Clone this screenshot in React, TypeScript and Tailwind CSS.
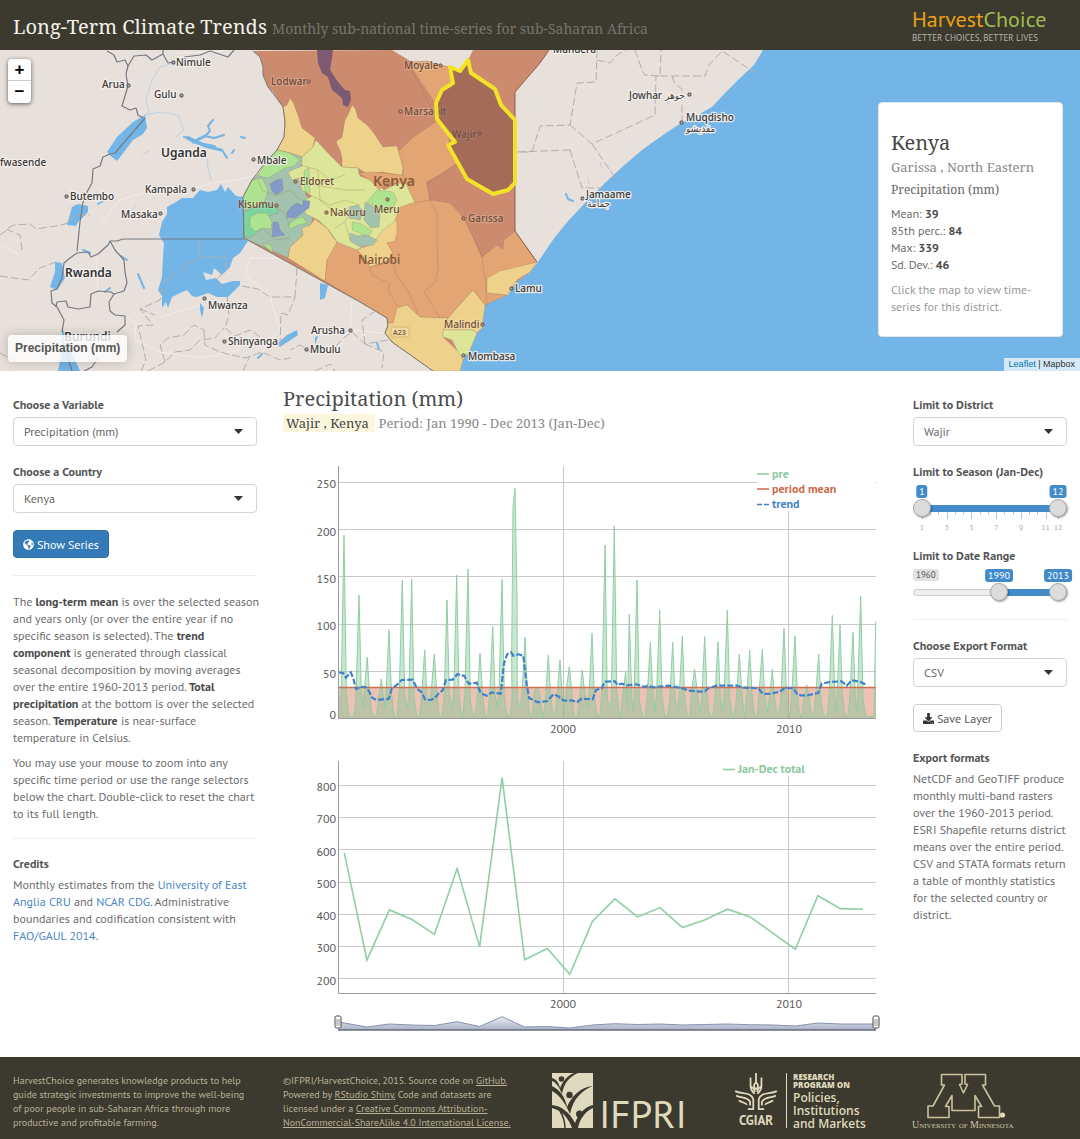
import { useId, useState } from 'react';
import type { ReactNode } from 'react';
import { FaGlobeAmericas, FaDownload } from 'react-icons/fa';

const RED = '#cc8a6e';
const ORANGE = '#e4a574';
const YELLOW = '#eed28c';
const LIME = '#dde698';
const GREEN = '#aee38f';
const MINT = '#7ed3a0';
const TEAL = '#a3c3ae';
const BLUE = '#839bc9';
const WATER = '#73b5e6';

const DISTRICTS: [string, string][] = [
  [ORANGE, '413,70 412,62 427,61 440,65 450,67 452,83 442,90 435,103'],
  [ORANGE, '398,152 412,138 437,121 450,135 448,145 457,163 443,173 427,182 430,200 412,204 403,183 403,167'],
  [YELLOW, '290,98 293,102 298,115 302,128 315,138 313,147 302,157 290,153 277,150 284,137 285,120 283,107 287,105'],
  [YELLOW, '352,105 355,108 358,118 367,125 373,132 383,147 397,146 400,157 403,168 402,176 383,172 367,174 358,168 342,167 342,158 340,150 336,142 342,137 345,120 348,115'],
  [TEAL, '277,150 290,153 302,157 305,165 302,180 306,195 315,205 312,222 303,235 290,247 288,258 244,238 243,197 252,180 263,170 265,163'],
  [LIME, '316,140 328,153 342,167 358,168 360,176 376,182 384,190 400,182 406,184 415,203 404,208 398,220 388,230 374,241 357,250 346,249 337,242 333,236 327,228 318,220 306,214 300,203 312,196 302,190 299,178 292,180 288,172 302,166 302,157 313,147'],
  [YELLOW, '315,219 327,228 333,237 337,242 335,253 327,260 325,281 288,258 290,247 303,235 302,228 310,225'],
  [ORANGE, '358,173 373,172 403,175 407,183 387,183 379,190 370,180'],
  [ORANGE, '412,203 430,200 450,203 463,217 473,237 482,257 497,245 503,249 504,240 515,231 537,262 517,268 487,278 487,293 507,295 485,305 473,290 448,318 420,317 407,305 397,310 393,323 388,323 387,318 325,281 327,260 337,242 357,250 370,267 387,263 393,253 387,243 395,240 395,220 400,207'],
  [YELLOW, '357,250 373,243 383,230 388,226 397,220 397,233 395,241 387,243 393,253 387,261 370,267 365,258'],
  [YELLOW, '537,262 530,272 517,280 507,295 487,293 487,278 500,271 517,267'],
  [YELLOW, '407,305 420,317 448,318 443,332 443,337 460,353 463,360 460,371 433,371 392,342 385,333 388,323 393,323 397,308'],
  [YELLOW, '473,290 485,305 482,328 477,333 472,330 443,330 448,318'],
  [LIME, '443,330 472,330 477,333 470,350 463,360 457,350 452,340 443,337'],
  [GREEN, '277,150 290,153 300,160 294,166 285,168 268,178 258,176 265,163'],
  [GREEN, '252,180 262,178 268,190 264,203 246,210 243,197'],
  [MINT, '244,212 255,207 266,203 276,206 278,213 262,218 262,228 250,238 244,236'],
  [GREEN, '250,217 258,213 267,213 272,222 271,229 262,228 255,232 250,226'],
  [BLUE, '270,184 276,180 282,179 283,190 276,195 272,191'],
  [BLUE, '287,212 292,206 297,203 302,205 303,200 310,201 309,208 302,213 295,218 287,217'],
  [BLUE, '273,222 278,222 280,230 285,235 272,237'],
  [GREEN, '288,225 296,219 303,217 307,223 298,225 290,229'],
  [GREEN, '262,243 271,245 273,253'],
  [GREEN, '304,171 309,168 310,193 305,192'],
  [GREEN, '377,190 393,192 397,200 392,209 384,212 377,207 367,202'],
  [TEAL, '349,207 358,205 364,212 360,220 349,218'],
  [TEAL, '365,202 374,207 380,214 379,227 371,228 364,220'],
  [GREEN, '352,222 362,224 372,231 368,237 352,230'],
  [TEAL, '350,233 358,236 367,235 377,240 373,245 360,247 350,241'],
];

const KENYA =
  '253,51 260,57 263,67 263,75 268,87 273,92 278,100 283,107 285,123 284,137 277,150 265,163 263,170 252,180 243,197 244,238 360,302 387,318 388,326 385,333 392,342 433,371 460,371 463,360 470,350 477,333 482,328 485,305 497,298 507,295 517,282 530,272 537,262 515,231 515,92 540,63 549,50 473,50 468,60 460,71 450,67 440,65 427,61 412,62 402,56 392,50';
const WAJIR =
  '450,67 460,71 468,60 471,73 495,89 501,105 515,120 515,183 508,190 493,194 467,179 448,145 455,142 437,119 436,103 442,90 453,83';

const SOLID_BORDERS = [
  'M107 51 L114 55 L117 62 L125 60 L128 66 L134 56 L146 55 L152 60 L163 54 L168 63 L174 62 M163 54 L163 50 M184 57 L200 55 L210 51 L228 57 L234 50',
  'M128 66 L126 74 L128 86 L122 106 L130 110 L136 108 L138 115 L143 118',
  'M110 154 L103 157 L100 166 L93 169 L92 183 L88 190 L83 202 L80 222 L77 251',
  'M244 239 L123 239 L117 241 L110 241 L108 245 L98 254 L91 257 L88 252 L77 253 L70 258 L64 263 L62 278 L57 289 L51 291 L52 303 L57 307 L64 320 L62 332',
  'M110 241 L115 250 L124 260 L125 272 L127 283 L124 291 L114 294 L111 292 L98 291 L91 294 L90 307 L78 309 L68 307 L66 301 L57 302 L56 307',
  'M114 294 L109 302 L110 311 L115 315 L125 316 L125 325 L117 332 M98 358 L92 367 L84 371 M66 345 L68 358 L72 371',
];
const DASHED_BORDERS = [
  'M22 250 L20 235 L6 229 L14 225 L30 224 L36 229 L62 225 L70 222 L72 216 L90 215',
  'M0 235 L10 228 M0 276 L28 280 L40 268 L56 262 M0 353 L15 361',
  'M141 371 L146 360 L138 326 L153 325 L140 309 L160 300 L163 282 L199 257 L225 257 L226 268 L217 280 L222 290',
  'M199 240 L199 256 M140 309 L155 315 M242 286 L258 289 L270 297 L295 297 L297 268',
  'M280 346 L281 313 L288 315 L295 297 M227 296 L229 315 L225 328 L235 336 L250 330 L265 340',
  'M148 371 L165 362 L175 352 L190 350 L200 340 L215 338 L224 328 M165 362 L160 345 L168 338 L184 335 L194 325 L204 330',
  'M204 330 L205 345 L220 352 L245 358 L262 352 L280 360 L290 358 M243 371 L250 356 M315 371 L330 364 L335 371',
  'M388 340 L365 344 L352 332 L345 337 L330 352 L312 353 L300 345 L290 350 M365 344 L362 320 L374 312 M365 344 L384 352 L382 368',
  'M597 50 L596 82 L577 83 L570 125 L540 126 L532 152 L516 152 M570 125 L592 144 L655 115 L656 76',
  'M597 60 L610 63 L617 55 L626 50 M635 50 L642 70 L645 75 L660 76 L661 50 M660 76 L705 76 L709 65 L722 51 L754 72',
  'M672 76 L675 84 L682 89 L682 122 M592 144 L618 182 M570 150 L515 152 M570 150 L582 188 L604 188',
];
const LAKES = [
  '243,197 236,196 228,187 225,192 221,184 217,190 208,192 200,190 193,198 182,198 176,202 167,207 167,214 162,222 159,235 164,243 163,257 162,277 158,290 162,296 162,308 166,302 168,308 172,297 178,294 187,290 192,296 197,297 208,293 217,297 228,297 240,285 240,281 233,281 222,284 216,278 206,280 203,272 212,275 214,268 222,275 230,267 233,258 240,253 248,241 244,238',
  '145,115 147,128 143,134 133,140 124,152 117,161 112,157 107,152 117,137 133,122',
  '72,207 78,204 88,206 88,212 78,222 76,226 67,225',
  '55,262 62,263 65,278 57,290 50,287 55,272',
  '62,330 67,333 72,353 80,371 58,371 62,350',
  '297,330 298,335 280,347 277,344 287,335',
  '320,283 328,285 325,298 320,300',
  '315,337 318,336 315,345',
  '200,303 204,308 202,318 200,310',
];

type Place = { n: string; x: number; y: number; d?: [number, number]; k?: boolean };
const PLACES: Place[] = [
  { n: 'Nimule', x: 176, y: 66, d: [173, 62] },
  { n: 'Arua', x: 102, y: 88, d: [128, 85] },
  { n: 'Gulu', x: 154, y: 98, d: [181, 95] },
  { n: 'fwasende', x: 0, y: 166 },
  { n: 'Mbale', x: 257, y: 164, d: [253, 159] },
  { n: 'Butembo', x: 70, y: 200, d: [66, 196] },
  { n: 'Kampala', x: 145, y: 193, d: [193, 189] },
  { n: 'Masaka', x: 121, y: 218, d: [160, 213] },
  { n: 'Mwanza', x: 208, y: 309, d: [204, 298] },
  { n: 'Shinyanga', x: 228, y: 345, d: [224, 341] },
  { n: 'Arusha', x: 311, y: 334, d: [350, 330] },
  { n: 'Mbulu', x: 310, y: 353, d: [306, 349] },
  { n: 'Mombasa', x: 468, y: 360, d: [463, 355] },
  { n: 'Lamu', x: 515, y: 292, d: [511, 288] },
  { n: 'Mandera', x: 553, y: 53 },
  { n: 'Jowhar', x: 629, y: 99, d: [689, 94] },
  { n: 'Muqdisho', x: 686, y: 121, d: [681, 122] },
  { n: 'Jamaame', x: 586, y: 198, d: [582, 198] },
  { n: 'Lodwar', x: 271, y: 85, d: [308, 81], k: true },
  { n: 'Moyale', x: 404, y: 69, d: [440, 65], k: true },
  { n: 'Marsabit', x: 404, y: 115, d: [400, 111], k: true },
  { n: 'Wajir', x: 452, y: 138, d: [479, 133], k: true },
  { n: 'Garissa', x: 468, y: 222, d: [463, 218], k: true },
  { n: 'Malindi', x: 444, y: 328, d: [482, 324], k: true },
  { n: 'Eldoret', x: 300, y: 185, d: [295, 181], k: true },
  { n: 'Nakuru', x: 330, y: 216, d: [326, 212], k: true },
  { n: 'Kisumu', x: 238, y: 208, d: [276, 205], k: true },
  { n: 'Meru', x: 374, y: 213, d: [387, 199], k: true },
];

function MapCanvas() {
  return (
    <svg className="absolute inset-0 h-full w-full" viewBox="0 50 1080 321" preserveAspectRatio="xMidYMid slice" role="img" aria-label="Precipitation map of Kenya">
      <rect x="0" y="50" width="1080" height="321" fill="#e8e0da" />
      <g fill="none" stroke="#f3eeea" strokeWidth="1">
        <path d="M193 189 L212 183 L236 180 L252 176 M153 190 L120 200 L100 225 M270 297 L245 275 L250 258 L285 258 M270 297 L280 330 L262 352 M350 330 L384 333 M0 245 L18 254 M160 317 L200 305 M96 258 L98 290 M352 302 L350 330 L340 345 M125 318 L136 322 L135 340 L160 352 L200 358 L240 350" />
        <path d="M178 53 L210 52 L228 50" />
      </g>
      <polygon fill={WATER} points="763,50 754,65 740,78 726,92 712,107 698,115 681,123 663,135 642,150 621,168 605,183 586,202 569,220 555,237 544,253 538,262 530,272 517,282 508,295 497,299 485,305 482,328 477,333 470,350 463,360 460,371 1080,371 1080,50" />
      {LAKES.map((p) => <polygon key={p} points={p} fill={WATER} />)}
      <g fill="none" stroke={WATER} strokeLinecap="round" strokeLinejoin="round">
        <path strokeWidth="4" d="M188 138 L196 142 L204 145 L214 147" />
        <path strokeWidth="3" d="M193 142 L205 136 M205 146 L221 150" />
        <path strokeWidth="2" d="M205 136 L210 131 L208 126 L213 120 M205 136 L214 138 L224 135 M222 150 L227 158 M241 137 L245 138 M184 137 L188 138 M98 204 L103 201 M138 274 L144 288 M105 292 L110 288 M232 153 L234 150 M258 358 L262 354 M377 343 L379 349 M566 194 L568 199 L573 201 M83 250 L90 253 M121 256 L127 260" />
        <path strokeWidth="1" stroke="#b9d3e4" d="M174 63 L160 67 L152 80 L146 100 L149 112 L145 115 L160 112 L178 115 L184 130 L176 137 M207 158 L208 168 L211 180 M143 154 L150 150 M128 214 L136 205 M600 162 L602 168 M588 178 L589 184" />
      </g>
      <g fill="none" stroke="#b3aeab" strokeWidth="1" strokeDasharray="8 3">
        {DASHED_BORDERS.map((d) => <path key={d} d={d} />)}
      </g>
      <g fill="none" stroke="#737a85" strokeWidth="1.2" strokeLinejoin="round">
        {SOLID_BORDERS.map((d) => <path key={d} d={d} />)}
        <path d="M145 118 L115 153 L110 154" />
      </g>
      <polygon points={KENYA} fill={RED} />
      {DISTRICTS.map(([fill, pts], i) => (
        <polygon key={i} points={pts} fill={fill} stroke="#8c7060" strokeOpacity="0.35" strokeWidth="0.7" />
      ))}
      <g fill="none" stroke="#8c6a50" strokeOpacity="0.35" strokeWidth="0.8">
        <path d="M427 182 L430 200 L437 213 L437 240 L438 270 L435 282 L424 292 L440 318 M473 237 L482 257 L485 280 L487 305 M370 267 L372 275 L390 284 L388 290 L397 306 M392 254 L396 275 L408 290 L418 315 M412 70 L437 119 M428 183 L452 168" />
        <path d="M258 180 L262 190 L275 196 L290 190 L300 200 M275 206 L285 214 L290 226 M262 228 L275 240 L290 238 M300 165 L318 170 L330 180 L345 175 M318 170 L320 200 L332 210 M312 196 L330 205 L345 200 L360 205 M335 228 L345 222 L350 212 M345 222 L350 240 M315 185 L345 190 L365 190" />
      </g>
      <polygon points="317,50 333,50 332,58 330,70 338,82 345,90 350,91 351,100 348,107 343,105 342,98 332,90 328,77 322,73 318,63" fill="#7d5a72" />
      <polyline points="253,51 260,57 263,67 263,75 268,87 278,100 283,107 285,123 284,137 277,150 265,163 252,180 243,197 244,238 360,302 387,318 388,326 385,333 392,342 433,371" fill="none" stroke="#7c7a70" strokeWidth="1" />
      <polyline points="549,50 540,63 515,92 515,231 537,262" fill="none" stroke="#8b5f50" strokeWidth="1" />
      <rect x="391" y="327" width="18" height="10" fill="#eed8a4" stroke="#d3ad6c" strokeWidth="0.8" rx="1" />
      <g fontFamily='"Noto Sans", sans-serif' strokeLinejoin="round">
        {PLACES.map((p) => (
          <g key={p.n}>
            {p.d && <rect x={p.d[0] - 1} y={p.d[1] - 1} width="3" height="3" rx="1" fill={p.k ? '#c9a184' : '#bbb'} stroke={p.k ? '#6f4c38' : '#444'} strokeWidth="1" />}
            <text x={p.x} y={p.y} fontSize="10" fontWeight="500" fill={p.k ? '#6f4c38' : '#3a3a3a'} stroke="#f4efec" strokeOpacity={p.k ? 0.2 : 0.9} strokeWidth="2.5" style={{ paintOrder: 'stroke' }}>
              {p.n}
            </text>
          </g>
        ))}
        <g stroke="#f4efec" strokeWidth="2.5" fontSize="10" fill="#444" fontFamily='"DejaVu Sans Condensed", "DejaVu Sans", sans-serif'>
          <text x="665" y="99" style={{ paintOrder: 'stroke' }}>جوهر</text>
          <text x="686" y="132" style={{ paintOrder: 'stroke' }}>مقديشو</text>
          <text x="587" y="207" style={{ paintOrder: 'stroke' }}>جمامة</text>
        </g>
        <g fontSize="12" fontWeight="600" stroke="#f4efec" strokeWidth="2.5" fill="#333">
          <text x="161" y="157" style={{ paintOrder: 'stroke' }}>Uganda</text>
          <text x="65" y="277" style={{ paintOrder: 'stroke' }}>Rwanda</text>
          <text x="64" y="341" style={{ paintOrder: 'stroke' }}>Burundi</text>
        </g>
        <text x="373" y="186" fontSize="14" fontWeight="600" fill="#875a35">Kenya</text>
        <text x="358" y="264" fontSize="12" fontWeight="500" fill="#7d5637">Nairobi</text>
        <text x="393" y="335" fontSize="7" fontWeight="600" fill="#87653a">A23</text>
      </g>
      <polygon points={WAJIR} fill="#7a4c42" fillOpacity="0.5" stroke="#f3e328" strokeWidth="4" strokeLinejoin="round" />
    </svg>
  );
}

const px = (gx: number) => 330 + gx / 3;
const py = (gy: number) => 455 + gy / 3;

const PEAKS: [number, number][] = [
  [42, 240], [87, 420], [112, 606], [154, 672], [177, 524], [217, 375], [245, 373], [284, 585], [313, 598], [351, 435], [380, 360],
  [414, 342], [450, 595], [488, 514], [516, 373], [555, 100], [585, 547], [622, 700], [655, 600], [690, 615], [718, 635], [757, 645],
  [786, 535], [825, 270], [853, 212], [887, 650], [898, 478], [921, 375], [961, 562], [989, 466], [1028, 562], [1057, 543], [1094, 643],
  [1124, 545], [1164, 560], [1192, 466], [1228, 598], [1259, 585], [1297, 583], [1327, 642], [1362, 520], [1395, 542], [1430, 690],
  [1466, 598], [1507, 481], [1530, 510], [1569, 532], [1592, 423],
];

function rainfallPath() {
  const pts: [number, number][] = [[26, 725]];
  PEAKS.forEach(([x, y], i) => {
    const prev = i ? x - PEAKS[i - 1][0] : 30;
    const next = i < PEAKS.length - 1 ? PEAKS[i + 1][0] - x : 40;
    if (prev > 30) pts.push([x - 15, 782]);
    if (prev > 18) pts.push([x - 9, 735 - (i % 3) * 15]);
    if (x === 555) pts.push([545, 600], [549, 155]);
    pts.push([x, y]);
    if (x === 555) pts.push([561, 420]);
    if (next > 18) pts.push([x + 7, 705 + (i % 4) * 9]);
    if (next > 30) pts.push([x + 13, 770], [x + 18, 787]);
    else pts.push([x + next / 2, i % 2 ? 758 : 772]);
  });
  pts.push([1632, 782], [1637, 500]);
  return pts.map(([x, y]) => `${px(x).toFixed(1)},${py(y).toFixed(1)}`).join(' ');
}
const RAIN = rainfallPath();

const TREND = (
  '26,652 40,655 48,668 62,652 70,670 78,702 92,695 108,697 118,710 126,728 140,735 158,733 176,732 186,700 200,690 215,675 248,674 262,702 275,712 285,733 300,735 313,731 325,716 338,706 348,675 368,674 382,658 403,663 416,686 440,683 452,714 470,722 485,712 512,716 522,625 532,597 543,592 550,602 565,598 580,602 590,690 598,730 625,742 652,738 670,718 685,724 702,737 722,736 742,741 755,731 788,733 798,705 815,700 825,680 855,679 862,690 875,686 890,691 920,688 945,696 952,692 970,697 1015,692 1050,698 1078,707 1110,710 1125,708 1135,700 1160,692 1220,692 1240,698 1285,700 1298,716 1315,717 1350,710 1365,698 1390,700 1403,720 1428,722 1465,714 1475,686 1500,681 1535,679 1550,692 1565,676 1590,680 1606,688'
)
  .split(' ')
  .map((p) => p.split(',').map(Number))
  .map(([x, y]) => `${px(x).toFixed(1)},${py(y).toFixed(1)}`)
  .join(' ');

const TOTALS = [590, 257, 413, 383, 337, 541, 298, 823, 258, 293, 213, 377, 447, 391, 420, 358, 382, 415, 391, 341, 291, 457, 417, 415];
const yearX = (i: number) => 344.3 + 22.55 * i;
const totalY = (v: number) => 978.5 - (v - 200) * 0.3223;

const AXIS = { fontFamily: '"PT Sans", Lato, sans-serif', fontSize: 12, fill: '#555' } as const;

function MonthlyChart() {
  return (
    <svg className="mt-[23px] block w-full" viewBox="283 455 604 285" role="img" aria-label="Monthly precipitation">
      <g stroke="#c9c9c9" strokeWidth="1">
        {[482.5, 529.5, 576.5, 624.5, 671.5].map((y) => <line key={y} x1="338" x2="876" y1={y} y2={y} />)}
        <line x1="563.5" x2="563.5" y1="466" y2="718" />
        <line x1="788.5" x2="788.5" y1="511" y2="718" />
      </g>
      <rect x="338" y="687.5" width="538" height="31" fill="#cf5f3c" fillOpacity="0.38" />
      <polygon points={`338,718.5 ${RAIN} 876,718.5`} fill="#7cc592" fillOpacity="0.42" />
      <polyline points={RAIN} fill="none" stroke="#8fcfa3" strokeWidth="1" />
      <line x1="338" x2="876" y1="687.5" y2="687.5" stroke="#d0704f" strokeWidth="1.3" />
      <polyline points={TREND} fill="none" stroke="#3f82cb" strokeWidth="2.2" strokeDasharray="6 2" />
      <path d="M338.5 466 V718.5 H876" fill="none" stroke="#999" />
      <g {...AXIS} textAnchor="end">
        {[[250, 488], [200, 536], [150, 583], [100, 630], [50, 678], [0, 719]].map(([v, y]) => <text key={v} x="336" y={y}>{v}</text>)}
      </g>
      <g {...AXIS} textAnchor="middle">
        <text x="563" y="733">2000</text>
        <text x="789" y="733">2010</text>
      </g>
      <rect x="757" y="466" width="118" height="45" fill="#fff" />
      <g fontFamily='"PT Sans", Lato, sans-serif' fontSize="12" fontWeight="700">
        <path d="M757 474 H769" stroke="#8cc99d" strokeWidth="1.5" />
        <text x="772" y="478" fill="#8cc99d">pre</text>
        <path d="M757 489 H769" stroke="#cd6a4a" strokeWidth="1.5" />
        <text x="772" y="493" fill="#cd6a4a">period mean</text>
        <path d="M757 504.5 H769" stroke="#3f82cb" strokeWidth="1.5" strokeDasharray="5 2" />
        <text x="772" y="508" fill="#3f82cb">trend</text>
      </g>
    </svg>
  );
}

function Handle({ x }: { x: number }) {
  return (
    <g stroke="#444" strokeWidth="1">
      <rect x={x - 3} y="1016" width="6" height="12" rx="1.5" fill="#fff" />
      <path d={`M${x - 1} 1019 V1026 M${x + 1} 1019 V1026`} stroke="#777" strokeWidth="0.8" />
    </g>
  );
}

function TotalsChart() {
  const nav = [1022, 1027, 1024, 1025, 1025.5, 1021.7, 1026.5, 1016.7, 1027, 1026.5, 1028, 1025, 1023.7, 1024.5, 1024, 1025, 1024.5, 1024, 1024.7, 1025, 1026, 1023, 1024, 1024];
  const navLine = nav.map((y, i) => `${i ? yearX(i).toFixed(1) : 339},${y}`).join(' ') + ' 876,1024';
  return (
    <svg className="mt-[5px] block w-full" viewBox="283 745 604 300" role="img" aria-label="Total precipitation per season">
      <defs>
        <linearGradient id="nav-fill" x1="0" x2="0" y1="0" y2="1">
          <stop offset="0" stopColor="#e9ecf3" />
          <stop offset="1" stopColor="#a9b2c8" />
        </linearGradient>
      </defs>
      <g stroke="#c9c9c9" strokeWidth="1">
        {[785.5, 817.5, 849.5, 882.5, 914.5, 946.5, 978.5].map((y) => <line key={y} x1="338" x2="876" y1={y} y2={y} />)}
        <line x1="563.5" x2="563.5" y1="761" y2="993" />
        <line x1="788.5" x2="788.5" y1="776" y2="993" />
      </g>
      <path d="M338.5 761 V993.5 H876" fill="none" stroke="#999" />
      <polyline points={TOTALS.map((v, i) => `${yearX(i).toFixed(1)},${totalY(v).toFixed(1)}`).join(' ')} fill="none" stroke="#8fcfa3" strokeWidth="1.6" />
      <g {...AXIS} textAnchor="end">
        {[800, 700, 600, 500, 400, 300, 200].map((v) => <text key={v} x="336" y={Math.round(totalY(v) + 6)}>{v}</text>)}
      </g>
      <g {...AXIS} textAnchor="middle">
        <text x="563" y="1008">2000</text>
        <text x="789" y="1008">2010</text>
      </g>
      <g fontFamily='"PT Sans", Lato, sans-serif' fontSize="12" fontWeight="700">
        <path d="M723 769.5 H735" stroke="#8cc99d" strokeWidth="1.5" />
        <text x="738" y="773" fill="#8cc99d">Jan-Dec total</text>
      </g>
      <polygon points={`339,1030 ${navLine} 876,1030`} fill="url(#nav-fill)" />
      <polyline points={navLine} fill="none" stroke="#8792b3" strokeWidth="1" />
      <line x1="338" x2="876" y1="1030" y2="1030" stroke="#666c7c" strokeWidth="1.5" />
      <Handle x={338} />
      <Handle x={876} />
    </svg>
  );
}

function SelectField({ label, options }: { label: string; options: string[] }) {
  const id = useId();
  return (
    <div className="mb-[17px]">
      <label htmlFor={id} className="mb-1 block font-bold text-[#555]">{label}</label>
      <div className="relative">
        <select id={id} className="block h-[29px] w-full appearance-none rounded-[4px] border border-[#d4d4d4] bg-white px-2.5 text-[12px] text-[#666]">
          {options.map((o) => <option key={o}>{o}</option>)}
        </select>
        <svg className="pointer-events-none absolute top-[12px] right-[14px] h-[5px] w-[9px]" viewBox="0 0 9 5">
          <path d="M0 0 H9 L4.5 5Z" fill="#333" />
        </svg>
      </div>
    </div>
  );
}

const THUMB =
  'pointer-events-none absolute inset-x-0 top-0 m-0 h-[18px] w-full appearance-none bg-transparent [&::-webkit-slider-thumb]:pointer-events-auto [&::-webkit-slider-thumb]:h-[18px] [&::-webkit-slider-thumb]:w-[18px] [&::-webkit-slider-thumb]:appearance-none [&::-webkit-slider-thumb]:rounded-full [&::-webkit-slider-thumb]:border [&::-webkit-slider-thumb]:border-[#aaa] [&::-webkit-slider-thumb]:bg-[#dcdcdc] [&::-webkit-slider-thumb]:shadow-[1px_1px_2px_rgba(0,0,0,0.35)]';

function RangeField({ label, min, max, start, ticks, minBadge }: { label: string; min: number; max: number; start: [number, number]; ticks?: number[]; minBadge?: boolean }) {
  const [lo, setLo] = useState(start[0]);
  const [hi, setHi] = useState(start[1]);
  const pos = (v: number) => `calc(9px + (100% - 18px) * ${(v - min) / (max - min)})`;
  const minor = ticks ? Array.from({ length: 17 }, (_, i) => min + (i * 2) / 3).filter((v) => v < max) : [];
  const badge = 'absolute top-0 -translate-x-1/2 rounded-[3px] bg-[#428bca] px-[3px] text-[10px] leading-[13px] text-white';
  return (
    <fieldset>
      <legend className="mb-[5px] font-bold whitespace-nowrap text-[#555]">{label}</legend>
      <div className="relative h-[14px]">
        {minBadge && <span className="absolute top-0 left-0 rounded-[3px] bg-[#e1e1e1] px-[3px] text-[9px] leading-[12px] text-[#555]">{min}</span>}
        <span className={badge} style={{ left: pos(lo) }}>{lo}</span>
        <span className={badge} style={{ left: pos(hi) }}>{hi}</span>
      </div>
      <div className="relative h-[18px]">
        <div className="absolute inset-x-0 top-[6px] h-[7px] rounded-full border border-[#ccc] bg-[#eee]" />
        <div className="absolute top-[6px] h-[7px] bg-[#428bca]" style={{ left: pos(lo), width: `calc((100% - 18px) * ${(hi - lo) / (max - min)})` }} />
        {minor.map((v) => <i key={v} className="absolute top-[13px] h-[3px] w-px bg-[#b9cde0]" style={{ left: pos(v) }} />)}
        {ticks?.map((v) => <i key={v} className="absolute top-[13px] h-[7px] w-px bg-[#a8c8e6]" style={{ left: pos(v) }} />)}
        <input type="range" aria-label={`${label} from`} min={min} max={max} value={lo} onChange={(e) => setLo(Math.min(+e.target.value, hi))} className={THUMB} />
        <input type="range" aria-label={`${label} to`} min={min} max={max} value={hi} onChange={(e) => setHi(Math.max(+e.target.value, lo))} className={THUMB} />
      </div>
      {ticks && (
        <div className="relative mt-[5px] h-[10px]">
          {ticks.map((v) => <span key={v} className="absolute -translate-x-1/2 text-[8px] leading-[10px] text-[#9fb0bd]" style={{ left: pos(v) }}>{v}</span>)}
        </div>
      )}
    </fieldset>
  );
}

const Link = ({ children }: { children: ReactNode }) => <a href="#" className="text-[#4b86c4]">{children}</a>;
const FootLink = ({ children }: { children: ReactNode }) => <a href="#" className="underline">{children}</a>;
const B = ({ children }: { children: ReactNode }) => <strong className="font-bold text-[#4a4a4a]">{children}</strong>;

function IfpriMark() {
  return (
    <svg className="h-[55px] w-[41px] shrink-0" viewBox="0 0 41 55">
      <rect width="41" height="55" fill="#dfdabd" />
      <g fill="#3c392e">
        <circle cx="9.5" cy="6" r="2.8" />
        <circle cx="17.5" cy="22" r="3.2" />
        <circle cx="27.5" cy="41" r="3.5" />
        <path d="M0 5 C4 6 7 10 8 15 C11 8 16 2 22 0 L26 0 C17 4 12 10 10 21 C7 14 5 10 0 8Z" />
        <path d="M0 13 C8 17 13 24 15 34 C19 24 28 14 41 13 C30 17 21 26 18 41 C13 30 8 22 0 18Z" />
        <path d="M0 32 C10 33 18 40 23 50 C26 42 32 34 41 32 L41 35 C34 38 28 45 26 55 L20 55 C16 44 10 38 0 35Z" />
      </g>
      <path d="M13 55 C13 48 11 43 8 38" fill="none" stroke="#3c392e" strokeWidth="1.5" />
    </svg>
  );
}

function CgiarMark() {
  const half = (
    <>
      <path d="M1 20 C8 24 18 20 21 29 V40 H15" />
      <path d="M2 25 C8 28 15 26 17.5 32 V36" />
      <path d="M5 30.5 C9 33 12 32 14 35" />
      <path d="M18 5 V15 C18 20 21 21 22.5 23" />
      <path d="M18 15 C21 16 22.5 19 22.5 21" />
    </>
  );
  return (
    <svg className="h-[42px] w-[48px]" viewBox="0 0 48 42" fill="none" stroke="#dfdabd" strokeWidth="2" strokeLinejoin="round">
      {half}
      <g transform="translate(48 0) scale(-1 1)">{half}</g>
      <path d="M24 0 V10" />
      <path d="M24 10 C21 13 21 16 24 18 C27 16 27 13 24 10Z" />
    </svg>
  );
}

function MinnesotaMark() {
  return (
    <svg className="h-[46px] w-[80px]" viewBox="0 0 80 46">
      <path
        d="M14.5 1.5 H35 V11 L32.5 11.500 L36.500 20 L40.500 11.500 L38 11 V1.500 H58.500 V12 H55.500 L67.500 33 H72.500 V44.500 H51.500 V33.500 H54.500 L48 22.500 V37.500 H25 V22.500 L18.500 33.500 H22 V44.500 H1 V33 H6 L17.500 12 H14.500Z"
        fill="none"
        stroke="#c9c29d"
        strokeWidth="1.6"
        strokeLinejoin="round"
      />
      <circle cx="75.5" cy="42" r="2.6" fill="#dfdabd" />
    </svg>
  );
}

export default function App() {
  return (
    <div className="bg-white font-['PT_Sans',Lato,sans-serif] text-[12px] leading-[17px] text-[#6c6c6c]">
      <header className="grid h-[50px] grid-cols-12 bg-[#3c392e]">
        <h1 className="col-span-10 pt-[13px] pl-[13px] font-['Noto_Serif','DejaVu_Serif_Condensed',serif] text-[20px] leading-[28px] text-[#f2f0ea]">
          Long-Term Climate Trends{' '}
          <small className="text-[14px] text-[#77756c]">Monthly sub-national time-series for sub-Saharan Africa</small>
        </h1>
        <a href="#" className="col-span-2 block pt-[8px] pl-[12px] whitespace-nowrap">
          <span className="block text-[22px] leading-[22px] text-[#e9a115]">
            Harvest<span className="text-[#9fbb4f]">Choice</span>
          </span>
          <span className="block pt-[2px] text-[9px] leading-[12px] text-[#b3b2ad]">BETTER CHOICES, BETTER LIVES</span>
        </a>
      </header>

      <section className="relative h-[321px] overflow-hidden">
        <MapCanvas />
        <div className="absolute top-[9px] left-[8px] w-[23px] overflow-hidden rounded-[4px] bg-white font-['Liberation_Sans',Arial,sans-serif] text-[17px] leading-[22px] font-bold text-black shadow-[0_1px_4px_rgba(0,0,0,0.6)]">
          <button aria-label="Zoom in" className="block h-[22px] w-full border-b border-[#ccc]">+</button>
          <button aria-label="Zoom out" className="block h-[22px] w-full">−</button>
        </div>
        <div className="absolute bottom-[9px] left-[8px] rounded-[4px] bg-white/80 px-[7px] py-[5px] font-['Liberation_Sans',Arial,sans-serif] font-bold text-[#555] shadow-[0_0_12px_rgba(0,0,0,0.2)]">
          Precipitation (mm)
        </div>
        <aside className="absolute top-[52px] right-[17px] h-[235px] w-[185px] rounded-[4px] border border-[#dfe6ec] bg-white px-3 pt-[27px]">
          <h2 className="font-['Noto_Serif','DejaVu_Serif_Condensed',serif] text-[20px] leading-[26px] text-[#484848]">Kenya</h2>
          <p className="font-['Noto_Serif','DejaVu_Serif_Condensed',serif] text-[13px] leading-[22px] whitespace-nowrap text-[#888]">Garissa , North Eastern</p>
          <h3 className="mt-[3px] mb-[6px] font-['Noto_Serif','DejaVu_Serif_Condensed',serif] text-[12px] leading-[18px] text-[#666]">Precipitation (mm)</h3>
          <p>
            Mean: <B>39</B>
            <br />
            85th perc.: <B>84</B>
            <br />
            Max: <B>339</B>
            <br />
            Sd. Dev.: <B>46</B>
          </p>
          <p className="mt-[8px] text-[#999]">Click the map to view time-series for this district.</p>
        </aside>
        <div className="absolute right-0 bottom-0 bg-white/70 px-[5px] font-['Liberation_Sans',Arial,sans-serif] text-[9px] leading-[13px] text-[#333]">
          <a href="#" className="text-[#0078a8]">Leaflet</a> | Mapbox
        </div>
      </section>

      <main className="grid grid-cols-12">
        <section className="col-span-3 px-[13px] pt-[25px]">
          <SelectField label="Choose a Variable" options={['Precipitation (mm)', 'Temperature']} />
          <SelectField label="Choose a Country" options={['Kenya', 'Uganda', 'Rwanda']} />
          <button className="flex h-[28px] items-center gap-[3px] rounded-[4px] border border-[#2e6da4] bg-[#337ab7] px-[9px] text-white">
            <FaGlobeAmericas className="size-[11px]" /> Show Series
          </button>
          <hr className="my-[17px] border-[#eee]" />
          <p className="-mr-2">
            The <B>long-term mean</B> is over the selected season<br />
            and years only (or over the entire year if no<br />
            specific season is selected). The <B>trend<br />component</B> is generated through classical<br />
            seasonal decomposition by moving averages<br />
            over the entire 1960-2013 period. <B>Total<br />precipitation</B> at the bottom is over the selected<br />
            season. <B>Temperature</B> is near-surface<br />
            temperature in Celsius.
          </p>
          <p className="mt-2 mb-4">
            You may use your mouse to zoom into any specific time period or use the range selectors below the chart. Double-click to reset the chart to its full length.
          </p>
          <hr className="mb-[16px] border-[#eee]" />
          <h4 className="mb-1 font-bold text-[#555]">Credits</h4>
          <p>
            Monthly estimates from the <Link>University of East Anglia CRU</Link> and <Link>NCAR CDG</Link>. Administrative boundaries and codification consistent with <Link>FAO/GAUL 2014</Link>.
          </p>
        </section>

        <section className="col-span-7 px-[13px] pt-[16px] pb-[12px]">
          <h2 className="font-['Noto_Serif','DejaVu_Serif_Condensed',serif] text-[20px] leading-[24px] text-[#4d4d4d]">Precipitation (mm)</h2>
          <p className="mt-[3px] font-['Noto_Serif','DejaVu_Serif_Condensed',serif] text-[13px] leading-[18px] text-[#888]">
            <span className="inline-block bg-[#fcf6df] px-[3px] text-[#444]">Wajir , Kenya&nbsp;</span> Period: Jan 1990 - Dec 2013 (Jan-Dec)
          </p>
          <MonthlyChart />
          <TotalsChart />
        </section>

        <section className="col-span-2 px-[13px] pt-[25px]">
          <SelectField label="Limit to District" options={['Wajir', 'Garissa']} />
          <RangeField label="Limit to Season (Jan-Dec)" min={1} max={12} start={[1, 12]} ticks={[1, 3, 5, 7, 9, 11, 12]} />
          <div className="h-[15px]" />
          <RangeField label="Limit to Date Range" min={1960} max={2013} start={[1990, 2013]} minBadge />
          <hr className="mt-[18px] mb-[17px] border-[#eee]" />
          <SelectField label="Choose Export Format" options={['CSV', 'NetCDF', 'GeoTIFF', 'STATA', 'ESRI Shapefile']} />
          <button className="flex h-[28px] items-center gap-[3px] rounded-[4px] border border-[#ccc] bg-white px-[9px] text-[#555]">
            <FaDownload className="size-[11px] text-[#333]" /> Save Layer
          </button>
          <h4 className="mt-[17px] mb-1 font-bold text-[#555]">Export formats</h4>
          <p>
            NetCDF and GeoTIFF produce monthly multi-band rasters over the 1960-2013 period. ESRI Shapefile returns district means over the entire period. CSV and STATA formats return a table of monthly statistics for the selected country or district.
          </p>
        </section>
      </main>

      <footer className="grid h-[82px] grid-cols-12 bg-[#3c392e] pt-[16px] text-[10px] leading-[14px] text-[#b9b499]">
        <p className="col-span-3 pt-px pr-[22px] pl-[13px]">
          HarvestChoice generates knowledge products to help guide strategic investments to improve the well-being of poor people in sub-Saharan Africa through more productive and profitable farming.
        </p>
        <p className="col-span-3 pt-px pr-[22px] pl-[13px]">
          ©IFPRI/HarvestChoice, 2015. Source code on <FootLink>GitHub.</FootLink> Powered by <FootLink>RStudio Shiny.</FootLink> Code and datasets are licensed under a <FootLink>Creative Commons Attribution-NonCommercial-ShareAlike 4.0 International License.</FootLink>
        </p>
        <a href="#" className="col-span-2 flex h-[55px] gap-[6px] pl-[12px]">
          <IfpriMark />
          <span className="self-end text-[39px] leading-[28px] text-[#dfdabd]">IFPRI</span>
        </a>
        <a href="#" className="col-span-2 flex h-[55px] gap-[6px] pl-[12px] text-[#dfdabd]">
          <span className="flex flex-col items-center">
            <CgiarMark />
            <span className="pt-[2px] text-[13px] leading-[15px] font-bold">CGIAR</span>
          </span>
          <span className="border-l border-[#dfdabd] pl-[6px] font-['Open_Sans','Noto_Sans',sans-serif] text-[12px] leading-[13px] font-semibold whitespace-nowrap">
            <span className="mb-[2px] block text-[8px] leading-[8px] font-extrabold">
              RESEARCH
              <br />
              PROGRAM ON
            </span>
            Policies,
            <br />
            Institutions
            <br />
            and Markets
          </span>
        </a>
        <a href="#" className="col-span-2 flex flex-col items-start pl-[12px]">
          <span className="pl-[15px]"><MinnesotaMark /></span>
          <span className="font-['Liberation_Serif',serif] text-[10px] leading-[12px] whitespace-nowrap text-[#cdc7a6] [font-variant:small-caps]">University of Minnesota</span>
        </a>
      </footer>
    </div>
  );
}
